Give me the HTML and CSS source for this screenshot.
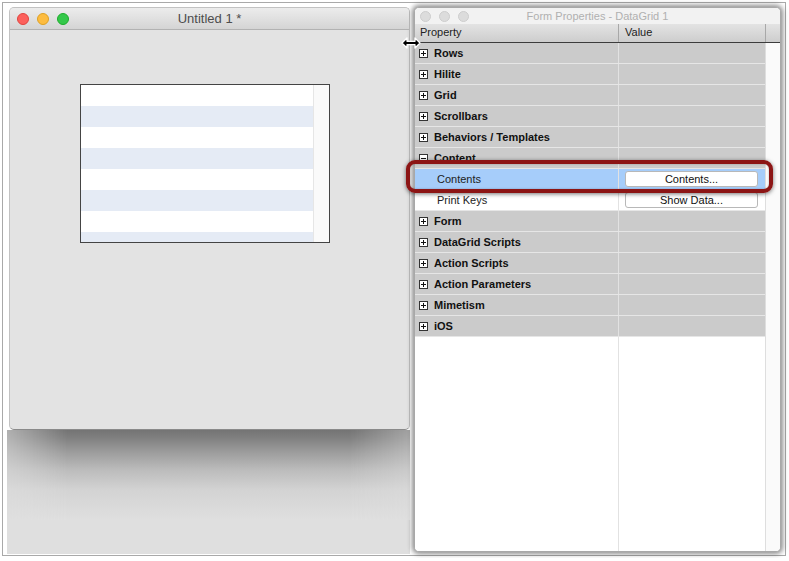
FILE: index.html
```html
<!DOCTYPE html>
<html>
<head>
	<meta charset="utf-8">
	<title>Form Properties - DataGrid 1</title>
	<link rel="stylesheet" href="styles.css">
</head>
<body>
	<div class="shot">
		<div class="desk">
			<div class="win main">
				<div class="titlebar">
					<div class="lights">
						<span class="light red"></span>
						<span class="light yellow"></span>
						<span class="light green"></span>
					</div>
					<div class="title">Untitled 1 *</div>
				</div>
				<div class="winbody">
					<div class="datagrid">
						<div class="dgrows">
							<div class="dgrow"></div>
							<div class="dgrow alt"></div>
							<div class="dgrow"></div>
							<div class="dgrow alt"></div>
							<div class="dgrow"></div>
							<div class="dgrow alt"></div>
							<div class="dgrow"></div>
							<div class="dgrow alt"></div>
						</div>
						<div class="dgscroll"></div>
					</div>
				</div>
			</div>
			<div class="shade"><div class="shade-top"></div></div>
		</div>

		<div class="win props">
			<div class="ptitle">
				<div class="lights dim">
					<span class="light"></span>
					<span class="light"></span>
					<span class="light"></span>
				</div>
				<div class="title">Form Properties - DataGrid 1</div>
			</div>
			<div class="thead">
				<div class="c1">Property</div>
				<div class="c2">Value</div>
				<div class="c3"></div>
			</div>
			<div class="tbody">
				<div class="rows">
					<div class="row cat"><div class="c1"><span class="box plus"></span>Rows</div><div class="c2"></div></div>
					<div class="row cat"><div class="c1"><span class="box plus"></span>Hilite</div><div class="c2"></div></div>
					<div class="row cat"><div class="c1"><span class="box plus"></span>Grid</div><div class="c2"></div></div>
					<div class="row cat"><div class="c1"><span class="box plus"></span>Scrollbars</div><div class="c2"></div></div>
					<div class="row cat"><div class="c1"><span class="box plus"></span>Behaviors / Templates</div><div class="c2"></div></div>
					<div class="row cat"><div class="c1"><span class="box minus"></span>Content</div><div class="c2"></div></div>
					<div class="row prop selected"><div class="c1">Contents</div><div class="c2"><div class="btn">Contents...</div></div></div>
					<div class="row prop"><div class="c1">Print Keys</div><div class="c2"><div class="btn">Show Data...</div></div></div>
					<div class="row cat"><div class="c1"><span class="box plus"></span>Form</div><div class="c2"></div></div>
					<div class="row cat"><div class="c1"><span class="box plus"></span>DataGrid Scripts</div><div class="c2"></div></div>
					<div class="row cat"><div class="c1"><span class="box plus"></span>Action Scripts</div><div class="c2"></div></div>
					<div class="row cat"><div class="c1"><span class="box plus"></span>Action Parameters</div><div class="c2"></div></div>
					<div class="row cat"><div class="c1"><span class="box plus"></span>Mimetism</div><div class="c2"></div></div>
					<div class="row cat"><div class="c1"><span class="box plus"></span>iOS</div><div class="c2"></div></div>
				</div>
				<div class="pscroll"></div>
			</div>
		</div>

		<div class="callout"></div>
		<svg class="cursor" width="20" height="12" viewBox="0 0 20 12">
			<path d="M1 6 L6 1 V4.3 H14 V1 L19 6 L14 11 V7.7 H6 V11 Z" fill="#000" stroke="#fff" stroke-width="1.3" stroke-linejoin="round"/>
		</svg>
	</div>
</body>
</html>
```

FILE: styles.css
```css
html, body {
	margin: 0;
	padding: 0;
	background: #fff;
	font-family: "Liberation Sans", Arial, sans-serif;
}
.shot {
	position: relative;
	box-sizing: border-box;
	margin: 2px;
	width: 784px;
	height: 554px;
	border: 1px solid #a9a9a9;
	padding: 4px 0 0 4px;
	display: flex;
	background: #fff;
}
.desk {
	width: 403px;
	display: flex;
	flex-direction: column;
	margin-bottom: 1px;
}
.win {
	box-sizing: border-box;
	border: 1px solid #bcbcbc;
	border-radius: 5px;
	overflow: hidden;
	display: flex;
	flex-direction: column;
	flex: none;
}
.main {
	margin-left: 2px;
	width: 401px;
	height: 423px;
	background: #e3e3e3;
	border-color: #c2c2c2;
	border-bottom-color: #8a8a8a;
}
.titlebar {
	height: 21px;
	flex: none;
	display: flex;
	align-items: center;
	position: relative;
	border-bottom: 1px solid #b2b2b2;
	background: linear-gradient(to bottom, #ececec 0%, #dedede 60%, #d4d4d4 100%);
}
.lights {
	display: flex;
	gap: 8px;
	padding-left: 7px;
	position: relative;
	z-index: 1;
}
.light {
	box-sizing: border-box;
	width: 12px;
	height: 12px;
	border-radius: 50%;
}
.light.red {
	background: #fc605c;
	border: 1px solid #e0443e;
}
.light.yellow {
	background: #fdbc40;
	border: 1px solid #dea123;
}
.light.green {
	background: #34c84a;
	border: 1px solid #1dad2b;
}
.title {
	position: absolute;
	left: 0;
	right: 0;
	text-align: center;
	font-size: 13px;
	color: #4d4d4d;
}
.winbody {
	flex: 1;
	padding: 54px 0 0 70px;
}
.datagrid {
	box-sizing: border-box;
	width: 250px;
	height: 159px;
	border: 1px solid #444;
	display: flex;
	overflow: hidden;
	background: #fff;
}
.dgrows {
	flex: 1;
}
.dgrow {
	height: 21px;
	background: #fff;
}
.dgrow.alt {
	background: #e5ebf5;
}
.dgscroll {
	width: 15px;
	border-left: 1px solid #e6e6e6;
	background: #fafafa;
}
.shade {
	flex: 1;
	background-color: #dfdfdf;
	overflow: hidden;
}
.shade-top {
	height: 90px;
	margin: 0 -10px;
	background: linear-gradient(to bottom, #747474 0px, #808080 8px, #9c9c9c 22px, #bcbcbc 40px, #d3d3d3 60px, #dfdfdf 90px);
	-webkit-mask-image: linear-gradient(to right, rgba(0,0,0,0.35) 0px, #000 70px, #000 calc(100% - 70px), rgba(0,0,0,0.5) 100%);
	mask-image: linear-gradient(to right, rgba(0,0,0,0.35) 0px, #000 70px, #000 calc(100% - 70px), rgba(0,0,0,0.5) 100%);
}

/* properties window */
.props {
	margin-left: 4px;
	width: 367px;
	height: 545px;
	background: #fff;
	border-color: #a8a8a8;
	box-shadow: 0 0 5px 2px rgba(0,0,0,0.45);
	font-size: 11px;
	color: #1a1a1a;
}
.ptitle {
	height: 16px;
	flex: none;
	display: flex;
	align-items: center;
	position: relative;
	background: #f2f2f2;
}
.lights.dim {
	gap: 8px;
	padding-left: 5px;
}
.lights.dim .light {
	width: 11px;
	height: 11px;
	background: #dcdcdc;
	border: 1px solid #cdcdcd;
}
.ptitle .title {
	font-size: 11px;
	color: #b0b0b0;
}
.thead {
	height: 18px;
	flex: none;
	display: flex;
	line-height: 17px;
	border-bottom: 1px solid #3c3c3c;
	background: linear-gradient(to bottom, #e3e3e3 0%, #d6d6d6 60%, #cdcdcd 100%);
	color: #222;
}
.thead .c1 {
	width: 198px;
	padding-left: 5px;
	border-right: 1px solid #a8a8a8;
}
.thead .c2 {
	width: 140px;
	padding-left: 6px;
	border-right: 1px solid #a8a8a8;
}
.thead .c3 {
	flex: 1;
}
.tbody {
	flex: 1;
	display: flex;
}
.rows {
	width: 350px;
	background: linear-gradient(to right, #fff 203px, #e2e2e2 203px, #e2e2e2 204px, #fff 204px);
}
.row {
	height: 20px;
	display: flex;
	align-items: center;
	border-bottom: 1px solid #e6e6e6;
}
.row .c1 {
	box-sizing: border-box;
	width: 204px;
	height: 100%;
	display: flex;
	align-items: center;
	border-right: 1px solid #e2e2e2;
}
.row .c2 {
	flex: 1;
	height: 100%;
	display: flex;
	align-items: center;
}
.row.cat {
	background: #cbcbcb;
	font-weight: bold;
	color: #111;
}
.row.cat .c1 {
	padding-left: 4px;
}
.row.prop .c1 {
	padding-left: 22px;
}
.row.prop {
	background: #fff;
	color: #222;
}
.row.selected {
	background: #a6cdfa;
}
.box {
	position: relative;
	box-sizing: border-box;
	width: 9px;
	height: 9px;
	border: 1px solid #333;
	background: #fff;
	margin-right: 6px;
}
.box::before {
	content: "";
	position: absolute;
	left: 1px;
	top: 3px;
	width: 5px;
	height: 1px;
	background: #111;
}
.box.plus::after {
	content: "";
	position: absolute;
	left: 3px;
	top: 1px;
	width: 1px;
	height: 5px;
	background: #111;
}
.btn {
	box-sizing: border-box;
	margin-left: 6px;
	width: 133px;
	height: 16px;
	line-height: 14px;
	text-align: center;
	background: #fff;
	border: 1px solid #b8b8b8;
	border-radius: 3px;
	color: #111;
}
.pscroll {
	flex: 1;
	border-left: 1px solid #dedede;
	background: #fafafa;
}

/* annotation overlays */
.callout {
	position: absolute;
	left: 403px;
	top: 157px;
	width: 367px;
	height: 33px;
	box-sizing: border-box;
	border: 4px solid #8c1515;
	border-radius: 9px;
	box-shadow: 0 1px 4px rgba(0,0,0,0.55), inset 0 0 2px rgba(0,0,0,0.3);
	z-index: 3;
}
.cursor {
	position: absolute;
	left: 398px;
	top: 34px;
	z-index: 4;
}
```
